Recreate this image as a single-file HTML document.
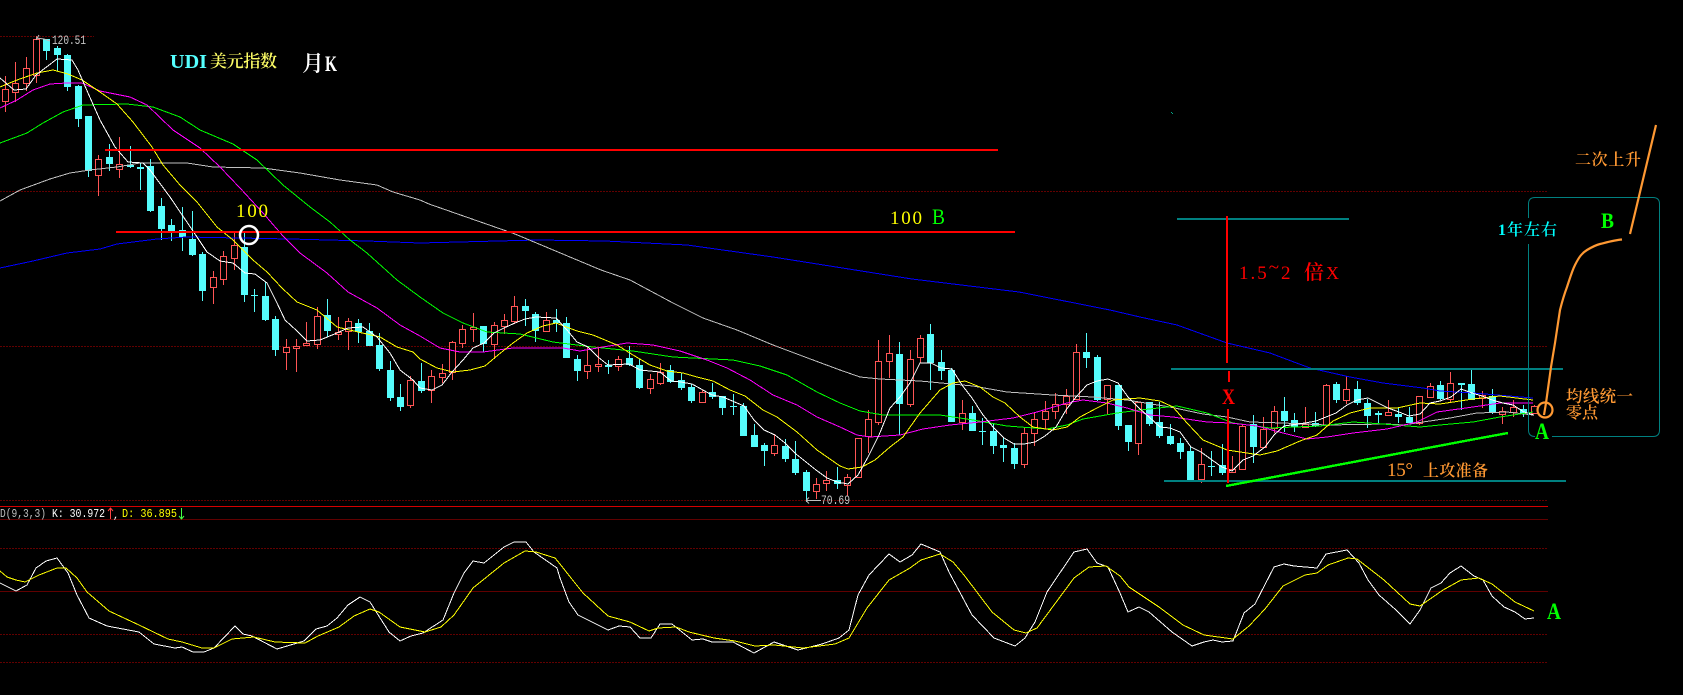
<!DOCTYPE html>
<html><head><meta charset="utf-8"><style>
html,body{margin:0;padding:0;background:#000;width:1683px;height:695px;overflow:hidden}
svg{display:block}
text{white-space:pre}
.m{font-family:"Liberation Mono",monospace}
.s{font-family:"Liberation Serif",serif}
.c{font-family:"Liberation Serif","Noto Serif CJK SC",serif}
</style></head><body>
<svg xmlns="http://www.w3.org/2000/svg" width="1683" height="695" viewBox="0 0 1683 695">
<rect width="1683" height="695" fill="#000"/>
<g shape-rendering="crispEdges" fill="none" stroke-width="1">
<path d="M0 36.5H94M0 191.5H1548M0 346.5H1548M0 500.5H1548M0 548.5H1548M0 634.5H1548M0 662.5H1548" stroke="#620000" stroke-dasharray="2 1"/>
<path d="M0 519.5H1548M0 591.5H1548" stroke="#600000"/>
<path d="M0 506.5H1548" stroke="#d40000"/>
<!-- cyan wicks -->
<path stroke="#55fcfc" d="M46.5 39V60M57.5 46V71M67.5 54V91M78.5 85V127M88.5 116V177M109.5 144V171M130.5 146V168M140.5 163V190M150.5 159V212M161.5 198V240M171.5 219V241M182.5 207V251M192.5 211V256M202.5 252V301M244.5 233V302M254.5 289V312M265.5 282V321M275.5 316V356M327.5 299V337M358.5 319V343M369.5 323V346M379.5 333V371M390.5 361V401M400.5 384V411M421.5 363V393M483.5 326V352M525.5 299V326M535.5 312V342M556.5 309V332M566.5 317V358M577.5 355V381M608.5 360V374M629.5 346V366M639.5 359V389M670.5 365V383M681.5 373V390M691.5 384V403M712.5 383V399M722.5 396V415M733.5 394V415M743.5 403V436M754.5 424V447M764.5 443V466M785.5 439V462M795.5 441V475M806.5 470V502M837.5 467V489M899.5 342V435M930.5 324V390M941.5 350V380M951.5 368V422M972.5 406V431M982.5 418V445M993.5 424V454M1003.5 437V462M1014.5 443V469M1086.5 333V368M1097.5 355V401M1118.5 385V430M1128.5 425V451M1149.5 402V426M1159.5 402V438M1170.5 424V445M1180.5 438V459M1190.5 447V480M1211.5 451V476M1222.5 444V475M1253.5 415V463M1284.5 397V432M1294.5 413V432M1315.5 412V427M1336.5 382V403M1357.5 381V405M1367.5 399V428M1378.5 411V423M1398.5 408V423M1409.5 407V423M1440.5 381V400M1461.5 383V410M1471.5 370V400M1492.5 389V414M1523.5 405V417"/>
<!-- cyan bodies -->
<path fill="#55fcfc" d="M43 39h7V51h-7zM54 48h7V55h-7zM64 55h7V87h-7zM75 86h7V119h-7zM85 116h7V171h-7zM106 157h7V164h-7zM127 165h7V167h-7zM137 167h7V169h-7zM147 166h7V211h-7zM158 206h7V229h-7zM168 225h7V232h-7zM179 230h7V237h-7zM189 239h7V255h-7zM199 254h7V291h-7zM241 247h7V295h-7zM251 295h7V296h-7zM262 296h7V320h-7zM272 319h7V350h-7zM324 315h7V331h-7zM355 323h7V332h-7zM366 331h7V346h-7zM376 345h7V369h-7zM387 370h7V398h-7zM397 397h7V407h-7zM418 381h7V391h-7zM480 326h7V344h-7zM522 306h7V311h-7zM532 314h7V331h-7zM553 320h7V323h-7zM563 323h7V358h-7zM574 359h7V371h-7zM605 365h7V367h-7zM626 358h7V365h-7zM636 365h7V388h-7zM667 370h7V382h-7zM678 380h7V388h-7zM688 387h7V401h-7zM709 392h7V397h-7zM719 396h7V408h-7zM730 406h7V407h-7zM740 406h7V436h-7zM751 435h7V447h-7zM761 445h7V451h-7zM782 446h7V459h-7zM792 459h7V473h-7zM803 472h7V491h-7zM834 480h7V484h-7zM896 354h7V404h-7zM927 334h7V363h-7zM938 362h7V371h-7zM948 370h7V422h-7zM969 413h7V431h-7zM979 431h7V432h-7zM990 431h7V446h-7zM1000 445h7V448h-7zM1011 448h7V464h-7zM1083 352h7V358h-7zM1094 357h7V400h-7zM1115 385h7V426h-7zM1125 425h7V442h-7zM1146 402h7V424h-7zM1156 422h7V436h-7zM1167 436h7V444h-7zM1177 443h7V452h-7zM1187 451h7V480h-7zM1208 466h7V467h-7zM1219 465h7V473h-7zM1250 424h7V447h-7zM1281 411h7V421h-7zM1291 420h7V427h-7zM1312 423h7V426h-7zM1333 384h7V400h-7zM1354 389h7V403h-7zM1364 403h7V416h-7zM1375 413h7V415h-7zM1395 414h7V417h-7zM1406 417h7V423h-7zM1437 385h7V399h-7zM1458 383h7V385h-7zM1468 384h7V400h-7zM1489 396h7V412h-7zM1520 409h7V413h-7z"/>
<!-- red wicks -->
<path stroke="#f55" d="M5.5 76V112M15.5 62V102M26.5 57V91M36.5 36V83M98.5 155V196M119.5 137V178M213.5 271V304M223.5 251V285M234.5 233V270M286.5 339V370M296.5 339V372M306.5 322V346M317.5 307V349M338.5 317V340M348.5 318V350M410.5 376V408M431.5 370V403M442.5 364V383M452.5 341V380M462.5 325V348M473.5 313V342M494.5 322V359M504.5 314V334M514.5 296V324M546.5 312V332M587.5 347V379M598.5 347V372M618.5 356V371M650.5 374V394M660.5 363V385M702.5 390V403M774.5 434V456M816.5 478V499M826.5 471V491M847.5 474V496M858.5 438V477M868.5 410V453M878.5 340V425M889.5 335V378M910.5 350V407M920.5 335V363M962.5 400V430M1024.5 428V468M1034.5 413V446M1045.5 401V429M1055.5 393V419M1066.5 389V414M1076.5 344V400M1107.5 385V414M1138.5 402V455M1201.5 448V483M1232.5 456V472M1242.5 425V469M1263.5 417V447M1274.5 406V433M1305.5 407V427M1326.5 384V426M1346.5 376V404M1388.5 400V416M1419.5 396V425M1430.5 383V397M1450.5 372V402M1482.5 391V408M1502.5 407V424M1513.5 400V417M1534.5 405V413"/>
<!-- red bodies -->
<path stroke="#f55" fill="#000" d="M2.5 89.5h6V101.5h-6zM12.5 83.5h6V92.5h-6zM23.5 68.5h6V83.5h-6zM33.5 39.5h6V75.5h-6zM95.5 159.5h6V175.5h-6zM116.5 164.5h6V169.5h-6zM210.5 277.5h6V287.5h-6zM220.5 256.5h6V279.5h-6zM231.5 245.5h6V258.5h-6zM283.5 347.5h6V352.5h-6zM293.5 346.5h6V348.5h-6zM303.5 343.5h6V345.5h-6zM314.5 316.5h6V344.5h-6zM335.5 332.5h6V334.5h-6zM345.5 321.5h6V331.5h-6zM407.5 380.5h6V405.5h-6zM428.5 376.5h6V390.5h-6zM439.5 373.5h6V377.5h-6zM449.5 342.5h6V372.5h-6zM459.5 329.5h6V343.5h-6zM470.5 327.5h6V329.5h-6zM491.5 325.5h6V344.5h-6zM501.5 320.5h6V326.5h-6zM511.5 306.5h6V321.5h-6zM543.5 320.5h6V331.5h-6zM584.5 365.5h6V371.5h-6zM595.5 364.5h6V366.5h-6zM615.5 359.5h6V366.5h-6zM647.5 379.5h6V388.5h-6zM657.5 372.5h6V383.5h-6zM699.5 392.5h6V402.5h-6zM771.5 445.5h6V453.5h-6zM813.5 484.5h6V491.5h-6zM823.5 480.5h6V483.5h-6zM844.5 477.5h6V485.5h-6zM855.5 438.5h6V477.5h-6zM865.5 419.5h6V436.5h-6zM875.5 361.5h6V422.5h-6zM886.5 353.5h6V361.5h-6zM907.5 359.5h6V404.5h-6zM917.5 338.5h6V357.5h-6zM959.5 413.5h6V422.5h-6zM1021.5 433.5h6V464.5h-6zM1031.5 419.5h6V433.5h-6zM1042.5 411.5h6V419.5h-6zM1052.5 404.5h6V411.5h-6zM1063.5 396.5h6V404.5h-6zM1073.5 352.5h6V399.5h-6zM1104.5 385.5h6V399.5h-6zM1135.5 402.5h6V443.5h-6zM1198.5 464.5h6V479.5h-6zM1229.5 469.5h6V472.5h-6zM1239.5 426.5h6V469.5h-6zM1260.5 429.5h6V447.5h-6zM1271.5 411.5h6V428.5h-6zM1302.5 424.5h6V427.5h-6zM1323.5 385.5h6V425.5h-6zM1343.5 389.5h6V400.5h-6zM1385.5 412.5h6V415.5h-6zM1416.5 396.5h6V423.5h-6zM1427.5 386.5h6V397.5h-6zM1447.5 383.5h6V399.5h-6zM1479.5 395.5h6V398.5h-6zM1499.5 411.5h6V414.5h-6zM1510.5 407.5h6V412.5h-6zM1531.5 406.5h6V413.5h-6z"/>
</g>
<g fill="none" stroke-width="1" stroke-linejoin="round" shape-rendering="crispEdges">
<!-- blue -->
<polyline stroke="#0000ff" points="0,268 33,261 67,253 100,249 117,244 157,239 187,237 290,239 367,241 420,243 537,240 605,241 687,245 773,257 912,279 1019,292 1110,310 1140,317 1177,325 1227,343 1270,353 1310,368 1350,377 1383,383 1423,388 1440,391 1473,393 1533,398"/>
<!-- grey -->
<polyline stroke="#c0c0c0" points="0,201 20,190 50,179 70,173 90,170 117,167 140,163 187,163 213,167 263,168 300,173 340,180 377,185 393,192 420,200 429,204 515,234 601,270 630,280 673,303 703,318 737,330 773,345 813,360 840,370 860,377 880,379 920,381 973,386 1007,392 1053,395 1093,397 1127,400 1170,407 1203,414 1227,417 1250,422 1283,423 1327,425 1387,424 1403,425 1423,422 1450,418 1477,413 1507,412 1533,415"/>
<!-- green -->
<polyline stroke="#00ff00" points="0,143 27,133 43,123 63,112 83,105 127,104 153,107 180,117 200,130 233,144 257,160 283,185 310,207 330,222 350,240 367,253 397,280 420,297 443,313 463,323 487,332 520,334 553,342 593,347 633,351 673,357 693,358 733,360 760,366 787,375 817,392 840,403 860,411 883,415 940,415 973,420 1007,426 1047,429 1067,425 1083,419 1117,413 1140,410 1177,406 1207,413 1233,423 1270,428 1320,426 1353,422 1383,424 1420,427 1440,425 1473,422 1500,417 1533,412"/>
<!-- magenta -->
<polyline stroke="#ff00ff" points="0,108 17,100 33,90 50,84 67,83 82,83 100,91 130,97 147,105 173,130 200,148 220,167 240,188 263,213 283,236 300,253 327,273 348,292 377,308 400,325 420,336 440,348 460,352 483,352 513,348 540,348 563,348 580,351 603,347 627,343 653,345 680,351 707,360 727,368 750,380 773,395 797,405 817,417 840,427 857,435 870,437 900,435 923,429 950,425 980,422 1013,418 1037,412 1067,403 1083,400 1107,403 1127,408 1150,415 1173,417 1207,422 1230,423 1257,426 1283,433 1307,439 1327,437 1353,433 1387,429 1417,422 1437,412 1473,407 1500,403 1533,403"/>
<!-- yellow -->
<polyline stroke="#ffff00" points="0,87 17,80 37,73 53,70 68,74 82,80 100,92 117,104 133,122 152,147 163,165 180,185 197,202 217,227 233,240 253,260 267,272 282,288 297,302 317,310 337,327 358,332 380,337 397,347 413,352 420,359 437,368 453,372 470,370 485,366 498,355 513,343 527,333 543,326 556,323 577,331 593,335 617,345 633,355 650,365 667,371 683,373 697,377 713,381 730,390 745,396 763,410 777,417 797,432 817,450 840,466 848,469 862,467 875,460 890,447 903,437 920,413 940,390 953,383 965,381 980,387 993,397 1005,403 1020,417 1033,427 1053,430 1067,427 1080,417 1097,408 1113,400 1140,398 1160,401 1173,407 1187,423 1203,440 1227,450 1260,455 1277,451 1300,441 1317,435 1333,421 1350,413 1370,408 1397,408 1420,403 1440,404 1473,399 1500,396 1533,400"/>
<!-- white -->
<polyline stroke="#ffffff" points="0,78 14,90 26,89 36,75 57,59 72,60 78,70 88,93 100,120 115,147 128,162 143,163 150,170 170,197 197,237 207,252 220,261 233,263 245,273 255,274 267,283 277,303 285,320 297,331 307,341 320,340 337,333 348,328 363,327 377,337 390,353 400,370 413,380 420,388 432,390 442,385 452,372 463,360 473,348 484,343 494,333 504,328 515,323 525,319 536,317 556,318 567,330 577,342 588,347 598,357 608,365 629,364 640,370 660,372 671,381 681,382 692,384 712,395 723,397 744,406 754,420 764,430 775,435 785,443 796,454 806,462 816,470 827,478 837,482 848,484 858,475 868,457 879,435 890,408 900,397 910,383 920,363 931,363 941,368 952,369 962,385 972,398 983,415 993,427 1004,438 1014,444 1024,444 1035,442 1045,436 1056,427 1066,410 1076,397 1087,385 1097,381 1108,379 1118,383 1128,397 1139,408 1149,417 1160,427 1170,428 1180,432 1191,447 1201,452 1212,460 1222,467 1232,471 1243,460 1253,456 1265,447 1274,435 1284,426 1305,423 1316,421 1326,417 1336,413 1347,405 1357,400 1368,398 1378,403 1388,408 1399,412 1409,416 1420,414 1430,403 1440,401 1451,397 1461,389 1472,393 1482,396 1492,400 1503,403 1513,405 1524,412 1534,415"/>
<!-- KDJ -->
<polyline stroke="#ffffff" points="0,583 16,591 27,585 36,568 46,561 57,558 68,573 77,595 89,618 107,626 139,632 154,644 175,648 182,647 193,652 204,652 214,648 235,626 243,634 252,636 277,649 304,641 316,629 327,626 337,618 348,605 360,597 370,602 389,632 400,641 411,636 423,633 443,620 454,593 464,573 473,561 484,563 504,547 514,542 526,542 534,552 557,568 560,578 569,602 578,615 608,630 619,626 630,627 640,638 651,638 660,624 672,624 692,640 703,639 712,642 733,642 754,653 774,642 798,650 822,644 839,638 849,630 858,595 869,575 889,554 900,562 912,555 921,544 940,552 949,572 972,615 994,638 1015,646 1025,638 1035,622 1047,592 1074,552 1087,549 1097,563 1108,567 1120,593 1128,612 1139,607 1149,612 1172,632 1192,646 1204,642 1213,640 1222,642 1233,641 1244,613 1255,604 1274,567 1284,564 1294,566 1317,568 1326,554 1347,550 1359,563 1368,580 1379,595 1396,610 1410,624 1420,610 1431,588 1441,583 1450,573 1461,566 1474,576 1483,580 1492,596 1504,607 1515,612 1525,619 1534,618"/>
<polyline stroke="#ffff00" points="0,571 7,577 16,580 25,582 39,575 57,568 66,568 77,578 87,592 109,611 139,625 168,639 182,642 202,648 214,648 232,639 254,637 275,642 305,643 318,636 339,627 354,616 370,609 379,612 400,627 425,632 441,627 454,615 473,588 504,563 525,551 536,552 555,558 560,564 571,578 583,593 608,616 630,622 649,631 658,628 676,627 689,632 714,638 735,641 755,646 774,645 803,648 835,644 849,638 867,608 889,580 910,568 921,560 940,554 953,562 964,575 992,612 1014,630 1026,633 1037,628 1074,578 1089,567 1106,566 1120,576 1129,587 1159,607 1183,625 1204,635 1233,639 1249,626 1265,609 1283,586 1305,575 1317,573 1328,565 1348,558 1357,559 1384,580 1410,604 1420,606 1443,590 1461,580 1479,578 1492,584 1515,602 1534,611"/>
</g>
<g fill="none" shape-rendering="crispEdges">
<!-- red horizontal -->
<path stroke="#ff0000" stroke-width="2" d="M105 150H998M116 232H1015"/>
<!-- teal lines -->
<path stroke="#008080" stroke-width="2" d="M1177 219H1349M1171 369H1563M1164 481H1566"/>
<!-- red verticals -->
<path stroke="#ff0000" stroke-width="2" d="M1227 216V363M1229 371V382M1228 409V483"/>
<!-- green rising -->
<path stroke="#00ff00" stroke-width="2.4" d="M1226 486L1470 440L1508 433"/>
</g>
<circle cx="249" cy="235" r="9" fill="none" stroke="#fff" stroke-width="2.5"/>
<!-- teal box -->
<path fill="none" stroke="#008080" stroke-width="1" d="M1528.5 218V204Q1528.5 197.500 1535 197.500H1653Q1659.500 197.500 1659.500 204V430Q1659.500 436.500 1653 436.500H1552M1535 436.500Q1528.500 436.500 1528.500 430V244"/>
<!-- orange -->
<g fill="none" stroke="#ff9933" stroke-width="2.2" stroke-linecap="butt">
<path d="M1546 403L1551 367L1555 343L1560 310C1563 298 1564 295 1567 287C1570 278 1572 271 1575 265C1579 257 1582 253 1587 250C1592 247 1596 245 1600 244C1608 242 1615 240 1622 239.500"/>
<path d="M1630 234L1656 125"/>
<circle cx="1545" cy="410" r="7.500"/>
<path d="M1546 403L1544 415"/>
</g>
<!-- small bits -->
<path fill="none" stroke="#c0c0c0" d="M36 40L39 35M36 38L44 39L50 41M806 500.500H821M806 500.500L809 497.500M806 500.500L809 503.500"/>
<path fill="none" stroke="#f44" d="M110.500 508V519M108 511L110.500 508L113 511"/>
<path fill="none" stroke="#4f4" d="M181.500 508V519M179 516L181.500 519L184 516"/>
<rect x="1171" y="112" width="1" height="1" fill="#0a8"/><rect x="1172" y="113" width="1" height="1" fill="#0a8"/>
<!-- text -->
<text class="m" x="52" y="44" font-size="13" fill="#c8c8c8" textLength="34" lengthAdjust="spacingAndGlyphs">120.51</text>
<text class="s" x="170" y="68" font-size="20" font-weight="700" fill="#55ffff" textLength="37" lengthAdjust="spacingAndGlyphs">UDI</text>
<text class="c" x="210" y="67" font-size="17" fill="#ffff66" font-weight="600" textLength="67">美元指数</text>
<text class="c" x="302" y="71" font-size="22" fill="#fff" font-weight="600">月</text>
<text class="s" x="325" y="71" font-size="22" font-weight="700" fill="#fff" textLength="12" lengthAdjust="spacingAndGlyphs">K</text>
<text class="s" x="236" y="217" font-size="19" fill="#ffff00" textLength="32">100</text>
<text class="s" x="890" y="224" font-size="19" fill="#ffff00" textLength="32">100</text>
<text class="s" x="932" y="224" font-size="22" fill="#00ff00" textLength="13" lengthAdjust="spacingAndGlyphs">B</text>
<text class="s" x="1239" y="279" font-size="19" fill="#ff0000" letter-spacing="2">1.5<tspan dy="-6">~</tspan><tspan dy="6">2</tspan></text>
<text class="c" x="1304" y="279" font-size="20" fill="#ff0000" font-weight="600">倍</text>
<text class="s" x="1326" y="279" font-size="18" fill="#ff0000">X</text>
<text class="s" x="1222" y="404" font-size="22" font-weight="700" fill="#ff0000" textLength="13" lengthAdjust="spacingAndGlyphs">X</text>
<text class="s" x="1387" y="476" font-size="19" fill="#ff9933" textLength="26">15°</text>
<text class="c" x="1423" y="476" font-size="16" fill="#ff9933" font-weight="600" textLength="65">上攻准备</text>
<text class="c" x="1498" y="235" font-size="16" fill="#00ffff" font-weight="600" textLength="59">1年左右</text>
<text class="c" x="1575" y="165" font-size="16" fill="#ff9933" font-weight="600" textLength="66">二次上升</text>
<text class="c" x="1566" y="402" font-size="16.500" fill="#ff9933" font-weight="600" textLength="67">均线统一</text>
<text class="c" x="1566" y="418" font-size="16" fill="#ff9933" font-weight="600" textLength="32">零点</text>
<text class="s" x="1601" y="228" font-size="22" font-weight="700" fill="#00ff00" textLength="13" lengthAdjust="spacingAndGlyphs">B</text>
<text class="s" x="1535" y="439" font-size="23" font-weight="700" fill="#00ff00" textLength="14" lengthAdjust="spacingAndGlyphs">A</text>
<text class="s" x="1547" y="619" font-size="23" font-weight="700" fill="#00ff00" textLength="14" lengthAdjust="spacingAndGlyphs">A</text>
<text class="m" x="0" y="517" font-size="12" fill="#c0c0c0" textLength="46" lengthAdjust="spacingAndGlyphs">D(9,3,3)</text>
<text class="m" x="52" y="517" font-size="12" fill="#fff" textLength="53" lengthAdjust="spacingAndGlyphs">K: 30.972</text>
<text class="m" x="113" y="518" font-size="10" fill="#fff">,</text>
<text class="m" x="122" y="517" font-size="12" fill="#ffff00" textLength="55" lengthAdjust="spacingAndGlyphs">D: 36.895</text>
<text class="m" x="821" y="504" font-size="13" fill="#c8c8c8" textLength="29" lengthAdjust="spacingAndGlyphs">70.69</text>
</svg>
</body></html>
